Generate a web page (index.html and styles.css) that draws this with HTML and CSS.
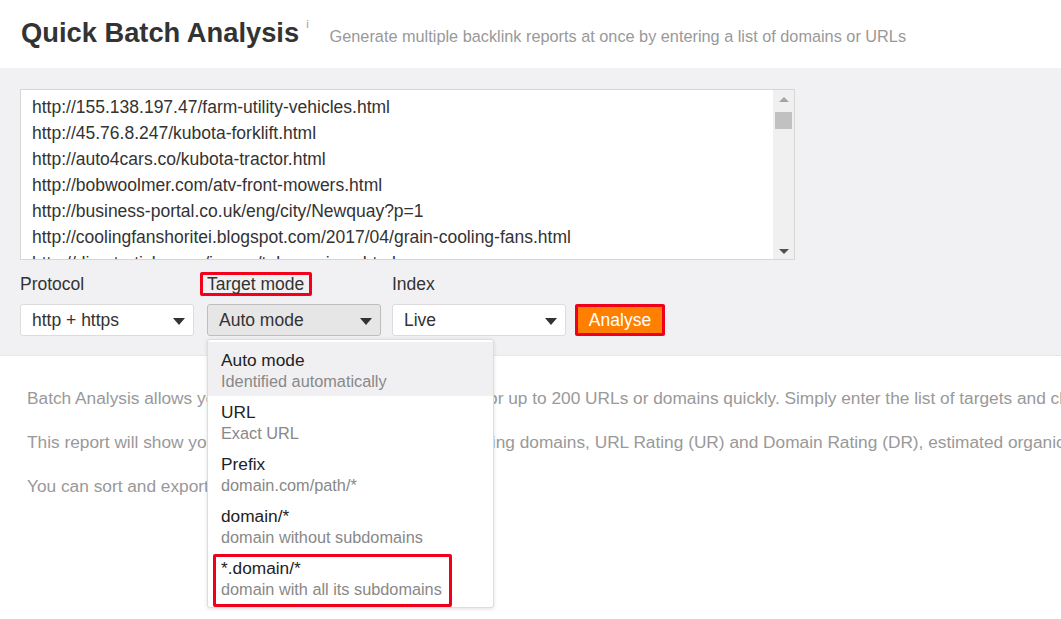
FILE: index.html
```html
<!DOCTYPE html>
<html>
<head>
<meta charset="utf-8">
<link rel="stylesheet" href="styles.css">
</head>
<body>
<header class="header">
  <h1 class="title">Quick Batch Analysis</h1>
  <sup class="info">i</sup>
  <span class="subtitle">Generate multiple backlink reports at once by entering a list of domains or URLs</span>
</header>
<section class="panel">
  <div class="textbox">
    <div class="lines">
      <div>http://155.138.197.47/farm-utility-vehicles.html</div>
      <div>http://45.76.8.247/kubota-forklift.html</div>
      <div>http://auto4cars.co/kubota-tractor.html</div>
      <div>http://bobwoolmer.com/atv-front-mowers.html</div>
      <div>http://business-portal.co.uk/eng/city/Newquay?p=1</div>
      <div>http://coolingfanshoritei.blogspot.com/2017/04/grain-cooling-fans.html</div>
      <div>http://directarticles.org/image/tube-springs.html</div>
    </div>
    <div class="scrollbar">
      <span class="arrow-up"></span>
      <span class="thumb"></span>
      <span class="spacer"></span>
      <span class="arrow-down"></span>
    </div>
  </div>
  <div class="controls">
    <div class="field f-protocol">
      <label class="label">Protocol</label>
      <div class="select">http + https<span class="caret"></span></div>
    </div>
    <div class="field f-target">
      <label class="label"><span class="marked">Target mode</span></label>
      <div class="select select-open">Auto mode<span class="caret"></span></div>
      <ul class="dropdown">
        <li class="opt active"><span class="opt-title">Auto mode</span><span class="opt-sub">Identified automatically</span></li>
        <li class="opt"><span class="opt-title">URL</span><span class="opt-sub">Exact URL</span></li>
        <li class="opt"><span class="opt-title">Prefix</span><span class="opt-sub">domain.com/path/*</span></li>
        <li class="opt"><span class="opt-title">domain/*</span><span class="opt-sub">domain without subdomains</span></li>
        <li class="opt"><span class="opt-title">*.domain/*</span><span class="opt-sub">domain with all its subdomains</span><span class="mark-box"></span></li>
      </ul>
    </div>
    <div class="field f-index">
      <label class="label">Index</label>
      <div class="select">Live<span class="caret"></span></div>
    </div>
    <button class="analyse">Analyse</button>
  </div>
</section>
<section class="about">
  <p>Batch Analysis allows you to check all the key SEO metrics for up to 200 URLs or domains quickly. Simply enter the list of targets and click Analyse.</p>
  <p>This report will show you the total number of backlinks, referring domains, URL Rating (UR) and Domain Rating (DR), estimated organic traffic and more.</p>
  <p>You can sort and export the results as CSV.</p>
</section>
</body>
</html>
```
FILE: styles.css
```css
* { box-sizing: border-box; }
html, body { margin: 0; padding: 0; }
body {
  width: 1061px;
  height: 619px;
  overflow: hidden;
  font-family: "Liberation Sans", Arial, sans-serif;
  color: #333;
  background: #fff;
}
.header {
  height: 68px;
  display: flex;
  align-items: baseline;
  padding: 16px 0 0 21px;
}
.title {
  margin: 0;
  font-size: 27.3px;
  font-weight: bold;
  color: #333;
  line-height: 34px;
}
.info {
  font-size: 11px;
  color: #999;
  margin-left: 7px;
  position: relative;
  top: -14px;
}
.subtitle {
  margin-left: 21px;
  font-size: 16.3px;
  color: #999;
}
.panel {
  background: #f1f1f3;
  height: 288px;
  padding: 21px 20px 0 20px;
  border-bottom: 1px solid #e6e6e8;
}
.textbox {
  width: 775px;
  height: 171px;
  border: 1px solid #d6d6d8;
  background: #fff;
  display: flex;
  overflow: hidden;
}
.lines {
  flex: 1;
  padding: 4px 0 0 11px;
  font-size: 17.5px;
  line-height: 26px;
  color: #333;
  white-space: nowrap;
  overflow: hidden;
}
.scrollbar {
  width: 21px;
  background: #f0f0f0;
  display: flex;
  flex-direction: column;
  align-items: center;
  padding: 7px 0 5px;
}
.arrow-up {
  width: 0; height: 0;
  border-left: 5px solid transparent;
  border-right: 5px solid transparent;
  border-bottom: 5px solid #a3a3a3;
}
.thumb {
  width: 17px;
  height: 17px;
  background: #c1c1c1;
  margin-top: 10px;
}
.spacer { flex: 1; }
.arrow-down {
  width: 0; height: 0;
  border-left: 5px solid transparent;
  border-right: 5px solid transparent;
  border-top: 5px solid #505050;
}
.controls {
  display: flex;
  align-items: flex-end;
  margin-top: 12px;
}
.field { position: relative; }
.f-protocol { width: 174px; margin-right: 13px; }
.f-target { width: 174px; margin-right: 11px; }
.f-index { width: 174px; margin-right: 9px; }
.label {
  display: block;
  font-size: 17.5px;
  line-height: 24px;
  height: 24px;
  margin-bottom: 8px;
  color: #333;
}
.marked {
  display: inline-block;
  margin-left: -7px;
  padding: 0 5px 0 4px;
  border: 3px solid #f5001a;
  border-radius: 2px;
  line-height: 18px;
  height: 24px;
}
.select {
  position: relative;
  height: 32px;
  line-height: 30px;
  padding-left: 11px;
  font-size: 17.5px;
  color: #333;
  background: #fff;
  border: 1px solid #dcdcdc;
  border-radius: 3px;
}
.select-open {
  background: #e6e6e7;
  border-color: #bdbdbf;
}
.caret {
  position: absolute;
  right: 8px;
  top: 13px;
  width: 0; height: 0;
  border-left: 6px solid transparent;
  border-right: 6px solid transparent;
  border-top: 7px solid #333;
}
.analyse {
  width: 90px;
  height: 32px;
  background: #ff8000;
  border: 3px solid #f0001a;
  border-radius: 2px;
  color: #fff;
  font-family: "Liberation Sans", Arial, sans-serif;
  font-size: 17.5px;
  padding: 0;
}
.dropdown {
  position: absolute;
  left: 0;
  top: 67px;
  width: 287px;
  margin: 0;
  padding: 2px 0 5px;
  list-style: none;
  background: #fff;
  border: 1px solid #ddd;
  border-radius: 3px;
  box-shadow: 0 1px 4px rgba(0,0,0,0.12);
  z-index: 10;
}
.opt {
  position: relative;
  height: 52px;
  padding: 8px 13px 0;
}
.opt.active { background: #f0f0f2; height: 54px; margin-bottom: -2px; }
.opt-title {
  display: block;
  font-size: 17.3px;
  line-height: 20px;
  color: #222;
}
.opt-sub {
  display: block;
  font-size: 16.3px;
  line-height: 22px;
  color: #888;
}
.mark-box {
  position: absolute;
  left: 5px;
  top: 4px;
  width: 239px;
  height: 53px;
  border: 3px solid #f0001a;
  border-radius: 2px;
}
.about {
  padding: 32px 0 0 27px;
  white-space: nowrap;
  overflow: hidden;
}
.about p {
  margin: 0 0 24px;
  font-size: 17.3px;
  line-height: 20px;
  color: #999;
}
```
